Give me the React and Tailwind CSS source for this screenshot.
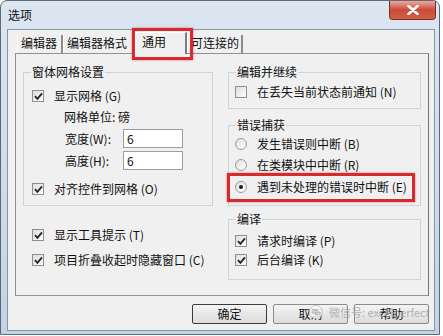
import React from 'react';

const FONT = { fontFamily: '"Noto Sans CJK SC", "Liberation Sans", sans-serif' };

const CheckBox = ({ checked }) => (
  <span className="w-[12px] h-[12px] shrink-0 border border-[#8f8f8f] bg-gradient-to-br from-[#dcdcdc] to-white flex items-center justify-center">
    {checked && (
      <svg width="9" height="9" viewBox="0 0 9 9">
        <path d="M1 4.2 L3.4 6.8 L8 1.4" fill="none" stroke="#1f2a36" strokeWidth="1.9" />
      </svg>
    )}
  </span>
);

const Radio = ({ checked }) => (
  <span className="w-[12px] h-[12px] shrink-0 rounded-full border border-[#9a9a9a] bg-gradient-to-br from-[#dedede] to-white flex items-center justify-center">
    {checked && <span className="w-[4px] h-[4px] rounded-full bg-[#1b1b1b]" />}
  </span>
);

const Row = ({ children, className = '' }) => (
  <div className={`flex items-center h-[14px] gap-[6px] ${className}`}>{children}</div>
);

const Group = ({ label, className = '', children }) => (
  <div className={`relative border border-[#cdd3d8] ${className}`}>
    <span className="absolute left-[7px] top-[-8px] px-[1px] bg-[#f0f0f0] leading-[14px]">{label}</span>
    {children}
  </div>
);

const Tab = ({ label, active, w }) =>
  active ? (
    <div className={`${w} h-[22px] relative z-10 -mb-[1px] bg-[#f0f0f0] border-t border-l border-white border-r-2 border-r-[#7d7d7d] pl-[6px] pt-[1px] leading-[16px]`}>
      {label}
    </div>
  ) : (
    <div className={`${w} h-[18px] border-l border-white border-r-2 border-r-[#8a8a8a] pl-[3px] leading-[16px]`}>
      {label}
    </div>
  );

const Btn = ({ label, main }) => (
  <div
    className={`w-[75px] h-[20px] flex items-center justify-center rounded-[2px] border bg-gradient-to-b from-[#f4f4f4] to-[#dcdcdc] ${
      main ? 'border-[#3a3a3a]' : 'border-[#8a8a8a]'
    }`}
  >
    {label}
  </div>
);

export default function App() {
  return (
    <div className="relative w-[443px] h-[336px] bg-white text-[12px] text-[#111]" style={FONT}>
      <div className="w-[440px] h-[335px] rounded-t-[7px] border border-[#5d6977] bg-gradient-to-b from-[#dbe6f1] to-[#c3d3e5] flex flex-col">
        {/* title bar */}
        <div className="h-[28px] flex items-start justify-between">
          <span className="ml-[7px] mt-[7px] leading-[14px]">选项</span>
          <div className="mr-[3px] w-[47px] h-[19px] rounded-b-[4px] border border-t-0 border-[#7a2f26] bg-gradient-to-b from-[#e9a99c] via-[#c8493a] to-[#d8613f] flex items-center justify-center">
            <svg width="12" height="10" viewBox="0 0 12 10">
              <path d="M1.5 1 L10.5 9 M10.5 1 L1.5 9" stroke="white" strokeWidth="2.6" strokeLinecap="round" />
            </svg>
          </div>
        </div>

        {/* client */}
        <div className="ml-[6px] mr-[4px] mb-[3px] flex-1 border border-[#8595a8] bg-[#f0f0f0] flex flex-col">
          {/* tabs */}
          <div className="ml-[9px] mt-[1px] h-[22px] flex items-end">
            <Tab label="编辑器" w="w-[46px]" />
            <Tab label="编辑器格式" w="w-[72px]" />
            <Tab label="通用" w="w-[52px]" active />
            <Tab label="可连接的" w="w-[56px]" />
          </div>

          {/* panel */}
          <div className="ml-[7px] w-[414px] h-[243px] border border-[#8e9298] border-r-[#6f7277] flex gap-[15px] pl-[7px] pt-[18px]">
            {/* left column */}
            <div className="w-[190px] flex flex-col">
              <Group label="窗体网格设置" className="h-[134px] pl-[8px] pt-[16px]">
                <Row>
                  <CheckBox checked />
                  <span className="ml-[4px]">显示网格 (G)</span>
                </Row>
                <div className="mt-[7px] ml-[32px] h-[14px] leading-[14px]">网格单位: 磅</div>
                <div className="mt-[5px] ml-[33px] flex flex-col gap-[3px]">
                  <div className="flex items-center h-[19px]">
                    <span className="w-[58px]">宽度(W):</span>
                    <div className="w-[60px] h-[19px] bg-white border border-[#9a9da3] pl-[3px] leading-[17px]">6</div>
                  </div>
                  <div className="flex items-center h-[19px]">
                    <span className="w-[58px]">高度(H):</span>
                    <div className="w-[60px] h-[19px] bg-white border border-[#9a9da3] pl-[3px] leading-[17px]">6</div>
                  </div>
                </div>
                <Row className="mt-[12px]">
                  <CheckBox checked />
                  <span className="ml-[4px]">对齐控件到网格 (O)</span>
                </Row>
              </Group>
              <Row className="mt-[22px] ml-[9px]">
                <CheckBox checked />
                <span className="ml-[4px]">显示工具提示 (T)</span>
              </Row>
              <Row className="mt-[11px] ml-[9px]">
                <CheckBox checked />
                <span className="ml-[4px]">项目折叠收起时隐藏窗口 (C)</span>
              </Row>
            </div>

            {/* right column */}
            <div className="w-[193px] flex flex-col">
              <Group label="编辑并继续" className="h-[37px] pl-[6px] pt-[12px]">
                <Row>
                  <CheckBox />
                  <span className="ml-[4px]">在丢失当前状态前通知 (N)</span>
                </Row>
              </Group>
              <Group label="错误捕获" className="mt-[16px] h-[81px] pl-[6px] pt-[11px]">
                <Row>
                  <Radio />
                  <span className="ml-[4px]">发生错误则中断 (B)</span>
                </Row>
                <Row className="mt-[7px]">
                  <Radio />
                  <span className="ml-[4px]">在类模块中中断 (R)</span>
                </Row>
                <Row className="mt-[8px]">
                  <Radio checked />
                  <span className="ml-[4px]">遇到未处理的错误时中断 (E)</span>
                </Row>
              </Group>
              <Group label="编译" className="mt-[13px] h-[61px] pl-[6px] pt-[14px]">
                <Row>
                  <CheckBox checked />
                  <span className="ml-[4px]">请求时编译 (P)</span>
                </Row>
                <Row className="mt-[5px]">
                  <CheckBox checked />
                  <span className="ml-[4px]">后台编译 (K)</span>
                </Row>
              </Group>
            </div>
          </div>

          {/* buttons */}
          <div className="mt-[8px] ml-[184px] flex gap-[6px]">
            <Btn label="确定" main />
            <Btn label="取消" />
            <Btn label="帮助" />
          </div>
        </div>
      </div>

      {/* red highlight marks */}
      <div className="absolute left-[132px] top-[28px] w-[61px] h-[32px] border-[3px] border-[#d62a2c] shadow-[0_0_2px_rgba(200,30,30,0.6)]" />
      <div className="absolute left-[227px] top-[173px] w-[188px] h-[29px] border-[3px] border-[#d62a2c] shadow-[0_0_2px_rgba(200,30,30,0.6)]" />

      {/* watermark */}
      <div className="absolute left-[309px] top-[305px] flex items-center gap-[6px] opacity-80">
        <svg width="14" height="14" viewBox="0 0 14 14">
          <circle cx="7" cy="7" r="6.5" fill="#ffffff" stroke="#bdbdbd" />
          <ellipse cx="6" cy="6.5" rx="3.5" ry="2.8" fill="#c8c8c8" />
          <ellipse cx="8.6" cy="8.3" rx="2.8" ry="2.2" fill="#dadada" />
        </svg>
        <span className="text-[11px] text-[#a5a5a5] leading-[14px]">微信号: excelperfect</span>
      </div>
    </div>
  );
}
